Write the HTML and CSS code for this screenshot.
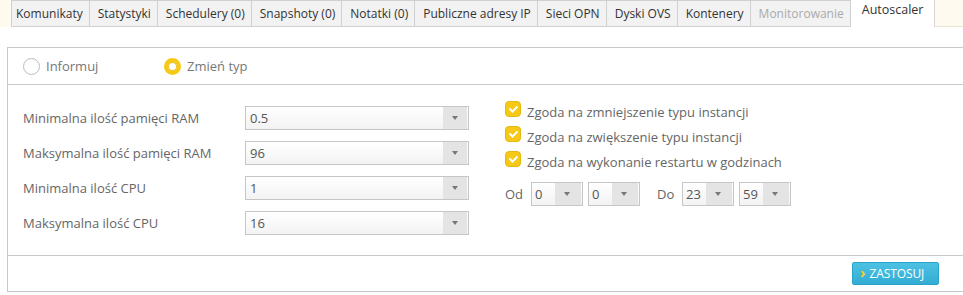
FILE: index.html
```html
<!DOCTYPE html>
<html>
<head>
<meta charset="utf-8">
<link rel="stylesheet" href="styles.css">
</head>
<body>
<div class="tabs">
  <div class="tab">Komunikaty</div>
  <div class="tab">Statystyki</div>
  <div class="tab">Schedulery (0)</div>
  <div class="tab">Snapshoty (0)</div>
  <div class="tab">Notatki (0)</div>
  <div class="tab">Publiczne adresy IP</div>
  <div class="tab">Sieci OPN</div>
  <div class="tab">Dyski OVS</div>
  <div class="tab">Kontenery</div>
  <div class="tab disabled">Monitorowanie</div>
  <div class="tab active">Autoscaler</div>
  <div class="tab-fill"></div>
</div>
<div class="panel">
  <div class="radios">
    <label class="radio"><span class="rdot"></span>Informuj</label>
    <label class="radio on"><span class="rdot"></span>Zmień typ</label>
  </div>
  <div class="body">
    <div class="left">
      <div class="row"><span class="lbl">Minimalna ilość pamięci RAM</span><div class="select"><span class="val">0.5</span><span class="arr"></span></div></div>
      <div class="row"><span class="lbl">Maksymalna ilość pamięci RAM</span><div class="select"><span class="val">96</span><span class="arr"></span></div></div>
      <div class="row"><span class="lbl">Minimalna ilość CPU</span><div class="select"><span class="val">1</span><span class="arr"></span></div></div>
      <div class="row"><span class="lbl">Maksymalna ilość CPU</span><div class="select"><span class="val">16</span><span class="arr"></span></div></div>
    </div>
    <div class="right">
      <div class="chk"><span class="box"><svg width="11" height="8" viewBox="0 0 11 8"><path d="M1.5 3.5 L4.5 6.5 L9.5 1.5" fill="none" stroke="#fff" stroke-width="2"/></svg></span>Zgoda na zmniejszenie typu instancji</div>
      <div class="chk"><span class="box"><svg width="11" height="8" viewBox="0 0 11 8"><path d="M1.5 3.5 L4.5 6.5 L9.5 1.5" fill="none" stroke="#fff" stroke-width="2"/></svg></span>Zgoda na zwiększenie typu instancji</div>
      <div class="chk"><span class="box"><svg width="11" height="8" viewBox="0 0 11 8"><path d="M1.5 3.5 L4.5 6.5 L9.5 1.5" fill="none" stroke="#fff" stroke-width="2"/></svg></span>Zgoda na wykonanie restartu w godzinach</div>
      <div class="time">
        <span class="tl">Od</span>
        <div class="select small"><span class="val">0</span><span class="arr"></span></div>
        <div class="select small"><span class="val">0</span><span class="arr"></span></div>
        <span class="tl do">Do</span>
        <div class="select small"><span class="val">23</span><span class="arr"></span></div>
        <div class="select small"><span class="val">59</span><span class="arr"></span></div>
      </div>
    </div>
  </div>
  <div class="footer">
    <button class="btn"><span class="chev">›</span>ZASTOSUJ</button>
  </div>
</div>
</body>
</html>
```
FILE: styles.css
```css
* { box-sizing: border-box; }
html, body { margin: 0; padding: 0; background: #fff; }
body {
  font-family: "Open Sans", "DejaVu Sans", sans-serif;
  font-size: 13px;
  color: #666;
  width: 963px;
  height: 295px;
  overflow: hidden;
}
.tabs {
  display: flex;
  height: 27px;
  padding-left: 11px;
  background: linear-gradient(#fffaf0, #fffaf0) left top / 11px 27px no-repeat;
}
.tab {
  height: 27px;
  line-height: 26px;
  padding: 0 6px 0 8px;
  font-size: 12px;
  background: #f2f2f2;
  border: 1px solid #d0d0d0;
  border-left: none;
  color: #333;
  white-space: nowrap;
}
.tab:first-child { border-left: 1px solid #d0d0d0; padding-left: 4px; }
.tab.disabled { color: #aaa; }
.tab.active {
  background: #fff;
  border: none;
  line-height: 20px;
  font-size: 12.5px;
  padding: 0 11px 0 11px;
}
.tab-fill {
  flex: 1;
  background: #fffaf0;
  border-left: 1px solid #d6d6d6;
  border-bottom: 1px solid #e8e2d0;
}
.panel {
  margin: 20px 0 0 7px;
  width: 960px;
  border: 1px solid #c8c8c8;
  border-right: none;
  height: 245px;
  display: flex;
  flex-direction: column;
}
.radios {
  height: 37px;
  border-bottom: 1px solid #c8c8c8;
  display: flex;
  align-items: center;
  padding-left: 15px;
}
.radio {
  display: flex;
  align-items: center;
  color: #777;
  font-size: 13px;
  width: 141px;
}
.rdot {
  width: 17px;
  height: 17px;
  border-radius: 50%;
  border: 1px solid #bbb;
  background: #fff;
  margin-right: 6px;
}
.radio.on .rdot {
  border: 4px solid #f5c915;
  background: #fff;
  box-shadow: 0 0 0 1px #eebd10 inset;
}
.body {
  height: 171px;
  border-bottom: 1px solid #c8c8c8;
  display: flex;
  padding-left: 15px;
}
.left {
  width: 482px;
  padding-top: 21px;
  display: flex;
  flex-direction: column;
  gap: 11px;
}
.row {
  display: flex;
  align-items: center;
  height: 24px;
}
.lbl {
  width: 222px;
  color: #666;
}
.select {
  width: 224px;
  height: 24px;
  border: 1px solid #c6c6c6;
  background: linear-gradient(#fff, #f3f3f3);
  display: flex;
  align-items: center;
}
.val {
  flex: 1;
  padding-left: 4px;
  color: #555;
}
.arr {
  width: 24px;
  height: 22px;
  background: #e4e4e4;
  margin-right: 1px;
  position: relative;
}
.arr::after {
  content: "";
  position: absolute;
  left: 9px;
  top: 9px;
  border-left: 3.5px solid transparent;
  border-right: 3.5px solid transparent;
  border-top: 4px solid #777;
}
.right {
  padding-top: 14px;
}
.chk {
  display: flex;
  align-items: center;
  height: 25px;
  color: #666;
  font-size: 13px;
}
.box {
  width: 16px;
  height: 16px;
  border-radius: 4px;
  background: #f5c915;
  border: 1px solid #e6b810;
  margin-right: 6px;
  margin-bottom: 6px;
  display: flex;
  align-items: center;
  justify-content: center;
}
.time {
  display: flex;
  align-items: center;
  margin-top: 8px;
}
.tl { width: 26px; color: #666; }
.tl.do { width: 25px; margin-left: 12px; }
.select.small {
  width: 52px;
  margin-right: 5px;
}
.select.small .val { padding-left: 3px; }
.select.small .arr { width: 26px; }
.footer {
  flex: 1;
  display: flex;
  align-items: center;
  justify-content: flex-end;
  padding-right: 28px;
}
.btn {
  font-family: "Open Sans", sans-serif;
  font-size: 12px;
  color: #fff;
  height: 23px;
  width: 87px;
  border: 1px solid #2aa3c9;
  border-radius: 2px;
  background: linear-gradient(#4cc1e3, #33acd4);
  display: flex;
  align-items: center;
  padding: 0 0 0 7px;
  letter-spacing: -0.1px;
}
.chev {
  color: #f0d21c;
  font-weight: bold;
  font-size: 15px;
  margin-right: 4px;
  line-height: 1;
  margin-top: -2px;
}
```
